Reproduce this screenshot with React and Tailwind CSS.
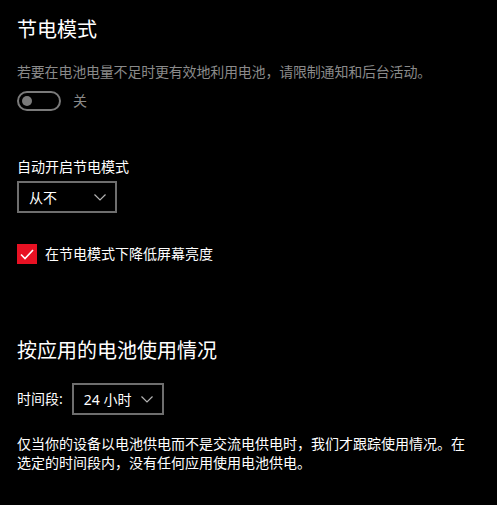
import React, { useState } from "react";

const font = {
  fontFamily: '"Segoe UI", "Noto Sans", "Noto Sans CJK SC", sans-serif',
};

function Chevron() {
  return (
    <svg width="12" height="7" viewBox="0 0 12 7" fill="none" className="shrink-0">
      <path d="M0.5 0.5 L6 6 L11.5 0.5" stroke="#b4b4b4" strokeWidth="1.2" />
    </svg>
  );
}

function Select({ value, width }) {
  return (
    <div
      className={`flex h-[32px] items-center justify-between border-2 border-[#6e6e6e] pl-[10px] pr-[9px] text-[14px] text-white ${width}`}
    >
      <span>{value}</span>
      <Chevron />
    </div>
  );
}

export default function App() {
  const [on, setOn] = useState(false);
  const [dim, setDim] = useState(true);

  return (
    <div className="min-h-[505px] w-[497px] bg-black pl-[17px] text-white" style={font}>
      {/* 节电模式 */}
      <h1 className="pt-[16px] text-[20px] leading-[28px]">节电模式</h1>

      <p className="mt-[18px] text-[14px] leading-[20px] text-[#8a8a8a] tracking-[-0.2px]">
        若要在电池电量不足时更有效地利用电池，请限制通知和后台活动。
      </p>

      <div className="mt-[9px] flex items-center gap-[12px]">
        <button
          onClick={() => setOn(!on)}
          className="flex h-[20px] w-[44px] items-center rounded-full border-2 border-[#7a7a7a] px-[3px]"
        >
          <span className="h-[10px] w-[10px] rounded-full bg-[#7a7a7a]" />
        </button>
        <span className="text-[14px] leading-[20px] text-[#8a8a8a]">{on ? "开" : "关"}</span>
      </div>

      <div className="mt-[46px] text-[14px] leading-[20px]">自动开启节电模式</div>
      <div className="mt-[4px]">
        <Select value="从不" width="w-[100px]" />
      </div>

      <label className="mt-[31px] flex items-center gap-[8px]" onClick={() => setDim(!dim)}>
        <span className="flex h-[20px] w-[20px] items-center justify-center bg-[#e81123]">
          {dim && (
            <svg width="14" height="11" viewBox="0 0 14 11" fill="none">
              <path d="M1 5.5 L5 9.5 L13 1" stroke="white" strokeWidth="1.6" />
            </svg>
          )}
        </span>
        <span className="text-[14px] leading-[20px]">在节电模式下降低屏幕亮度</span>
      </label>

      {/* 按应用的电池使用情况 */}
      <h2 className="mt-[73px] text-[20px] leading-[28px]">按应用的电池使用情况</h2>

      <div className="mt-[18px] flex items-center gap-[9px]">
        <span className="text-[14px] leading-[20px]">时间段:</span>
        <Select value="24 小时" width="w-[92px]" />
      </div>

      <p className="mt-[19px] w-[456px] text-[14px] leading-[19px]">
        仅当你的设备以电池供电而不是交流电供电时，我们才跟踪使用情况。在选定的时间段内，没有任何应用使用电池供电。
      </p>
    </div>
  );
}
